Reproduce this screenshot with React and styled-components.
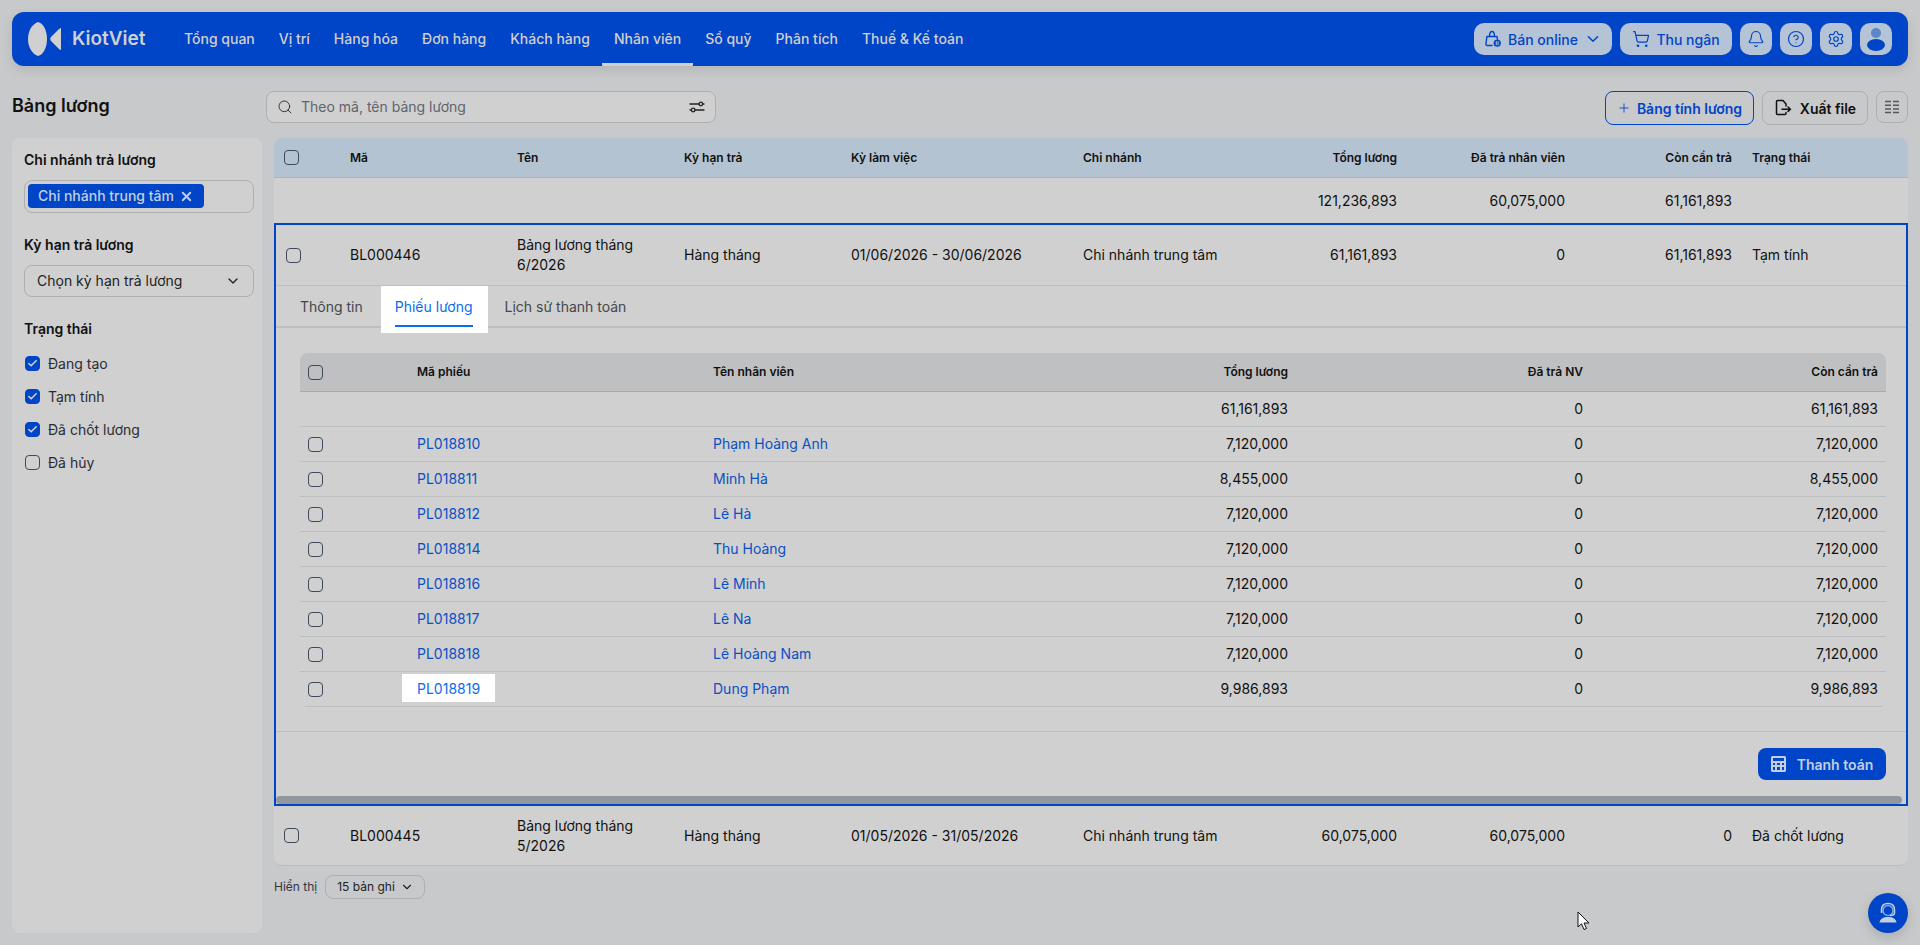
import React from 'react';
import styled, { createGlobalStyle } from 'styled-components';
import {
  Search,
  ShoppingCart,
  Bell,
  CircleHelp,
  Settings,
  Plus,
  ChevronDown,
  X,
  Check,
} from 'lucide-react';

const BLUE = '#0044c8';
const PANEL = '#d0d0d0';
const LINE = '#bdbec0';

const GlobalStyle = createGlobalStyle`
  * { box-sizing: border-box; }
  html, body { margin: 0; padding: 0; }
  body {
    background: #c8c9cb;
    color: #111;
    font-family: Inter, "Noto Sans", sans-serif;
    font-size: 14px;
    line-height: 20px;
    overflow: hidden;
  }
`;

const Page = styled.div`
  position: relative;
  width: 1920px;
  height: 945px;
  padding: 12px;
`;

const Header = styled.header`
  display: flex;
  align-items: center;
  height: 54px;
  padding: 0 16px;
  background: ${BLUE};
  border-radius: 12px;
  box-shadow: 0 4px 12px rgba(0, 0, 0, 0.1);
`;

const Logo = styled.div`
  display: flex;
  align-items: center;
  gap: 10px;
  width: 144px;
  color: ${PANEL};
  font-size: 19px;
  font-weight: 600;
`;

const Nav = styled.nav`
  display: flex;
  height: 100%;
  flex: 1;
`;

const NavItem = styled.a`
  display: flex;
  align-items: center;
  padding: 0 12px;
  color: ${PANEL};
  font-weight: 500;
  white-space: nowrap;
  border-bottom: 3px solid ${(p) => (p.$active ? PANEL : 'transparent')};
  border-top: 3px solid transparent;
  border-radius: 0 0 1px 1px;
`;

const HeaderActions = styled.div`
  display: flex;
  gap: 8px;
`;

const HeaderButton = styled.button`
  display: flex;
  align-items: center;
  justify-content: center;
  gap: 6px;
  height: 32px;
  width: ${(p) => p.$width || 32}px;
  padding: 0;
  border: 0;
  border-radius: 10px;
  background: #b4c3d6;
  color: ${BLUE};
  font: 500 14px Inter, sans-serif;
`;

const Toolbar = styled.div`
  display: flex;
  align-items: flex-start;
  height: 34px;
  margin: 25px 0 13px;
`;

const Title = styled.h1`
  flex: 0 0 254px;
  margin: 0;
  font-size: 18px;
  line-height: 30px;
  font-weight: 600;
  color: #111;
`;

const SearchBox = styled.div`
  display: flex;
  align-items: center;
  gap: 8px;
  width: 450px;
  height: 32px;
  padding: 0 10px;
  background: ${PANEL};
  border: 1px solid #aeafb1;
  border-radius: 8px;
  color: #60646c;
`;

const SearchText = styled.span`
  flex: 1;
`;

const ToolbarActions = styled.div`
  display: flex;
  gap: 8px;
  margin-left: auto;
`;

const ToolButton = styled.button`
  display: flex;
  align-items: center;
  justify-content: center;
  gap: ${(p) => (p.$primary ? 6 : 8)}px;
  width: ${(p) => p.$width}px;
  height: ${(p) => p.$height || 34}px;
  padding: 0;
  background: transparent;
  border: 1px solid ${(p) => (p.$primary ? BLUE : '#aeafb1')};
  border-radius: 8px;
  color: ${(p) => (p.$primary ? BLUE : '#111')};
  font: 600 14px Inter, sans-serif;
`;

const Body = styled.div`
  display: grid;
  grid-template-columns: 250px 1fr;
  column-gap: 12px;
  align-items: start;
`;

const Sidebar = styled.aside`
  height: 795px;
  padding: 12px 8px 12px 12px;
  background: ${PANEL};
  border-radius: 8px;
`;

const FilterLabel = styled.div`
  font-weight: 600;
  color: #111;
  margin-bottom: ${(p) => p.$gap || 10}px;
`;

const TagBox = styled.div`
  height: 33px;
  padding: 3px;
  margin-bottom: 22px;
  border: 1px solid #aeafb1;
  border-radius: 8px;
`;

const Tag = styled.span`
  display: inline-flex;
  align-items: center;
  justify-content: space-between;
  width: 176px;
  height: 24px;
  padding: 0 10px;
  background: ${BLUE};
  border-radius: 4px;
  color: #c3cede;
  font-weight: 500;
`;

const SelectBox = styled.div`
  display: flex;
  align-items: center;
  justify-content: space-between;
  height: 32px;
  padding: 0 12px;
  margin-bottom: 22px;
  border: 1px solid #aeafb1;
  border-radius: 8px;
  color: #222;
`;

const CheckRow = styled.label`
  display: flex;
  align-items: center;
  gap: 8px;
  height: 33px;
  color: #2a2c30;
`;

const Box = styled.span`
  display: inline-flex;
  flex: none;
  align-items: center;
  justify-content: center;
  width: 15px;
  height: 15px;
  margin-left: ${(p) => p.$left || 0}px;
  border-radius: 4px;
  border: 1px solid ${(p) => (p.$checked ? BLUE : '#3e4a5c')};
  background: ${(p) => (p.$checked ? BLUE : 'transparent')};
  color: ${PANEL};
`;

const Content = styled.main`
  min-width: 0;
`;

const MAIN_COLS = '76px 167px 167px 167px 232px 164px 150px 168px 167px 176px';
const INNER_COLS = '74px 167px 167px 167px 232px 164px 150px 168px 167px 174px';

const TableRow = styled.div`
  display: grid;
  grid-template-columns: ${(p) => (p.$inner ? INNER_COLS : MAIN_COLS)};
  align-items: center;
  height: ${(p) => p.$height}px;
  background: ${PANEL};
`;

const TableHead = styled(TableRow)`
  background: #b4c3d2;
  border-bottom: 1px solid #a3b5cc;
  border-radius: 8px 8px 0 0;
  font-size: 12px;
  font-weight: 600;
  color: #111;
`;

const LastRow = styled(TableRow)`
  border-bottom: 1px solid ${LINE};
  border-radius: 0 0 8px 8px;
`;

const CheckCell = styled.div`
  display: flex;
  padding-left: ${(p) => p.$left || 10}px;
`;

const Num = styled.div`
  text-align: right;
`;

const StatusCell = styled.div`
  padding-left: 20px;
`;

const Expanded = styled.section`
  position: relative;
  height: 583px;
  background: ${PANEL};
  border: 2px solid ${BLUE};
`;

const ExpandedRow = styled(TableRow)`
  border-bottom: 1px solid ${LINE};
`;

const Tabs = styled.div`
  display: flex;
  gap: 32px;
  height: 42px;
  padding-left: 24px;
  border-bottom: 2px solid ${LINE};
`;

const TabItem = styled.div`
  position: relative;
  height: 41px;
  padding-top: 11px;
  color: ${(p) => (p.$active ? '#0a6cf0' : '#44474d')};
  z-index: 0;

  ${(p) =>
    p.$active &&
    `&::before {
      content: '';
      position: absolute;
      z-index: -1;
      left: -14px;
      right: -15px;
      top: 0;
      bottom: -6px;
      background: #fff;
    }
    &::after {
      content: '';
      position: absolute;
      left: 0;
      right: 0;
      bottom: 0;
      height: 2px;
      background: #0a6cf0;
    }`}
`;

const SubWrap = styled.div`
  height: 404px;
  padding: 25px 20px 0 24px;
  border-bottom: 1px solid ${LINE};
`;

const SUB_COLS = '117px 296px 300px 275px 295px 295px';

const SubRow = styled.div`
  position: relative;
  display: grid;
  grid-template-columns: ${SUB_COLS};
  align-items: center;
  height: 35px;
  padding-right: 10px;
  border-bottom: 1px solid ${(p) => (p.$last ? 'transparent' : LINE)};

  ${(p) =>
    p.$last &&
    `&::after {
      content: '';
      position: absolute;
      left: 5px;
      right: 4px;
      bottom: -1px;
      height: 1px;
      background: ${LINE};
    }`}
`;

const SubHead = styled(SubRow)`
  height: 39px;
  background: #bfc0c2;
  border-bottom: 1px solid #a8a9ab;
  border-radius: 8px 8px 0 0;
  font-size: 12px;
  font-weight: 600;
  color: #111;
`;

const LinkText = styled.a`
  color: #0b4fc4;
`;

const SpotLink = styled.a`
  position: relative;
  z-index: 0;
  color: #0a6cf0;

  &::before {
    content: '';
    position: absolute;
    z-index: -1;
    left: -15px;
    right: -15px;
    top: -6px;
    bottom: -5px;
    background: #fff;
  }
`;

const SubFooter = styled.div`
  display: flex;
  justify-content: flex-end;
  padding: 16px 20px 0 0;
`;

const PayButton = styled.button`
  display: flex;
  align-items: center;
  justify-content: center;
  gap: 11px;
  width: 128px;
  height: 32px;
  padding: 0;
  border: 0;
  border-radius: 8px;
  background: ${BLUE};
  color: #c3cede;
  font: 600 14px Inter, sans-serif;
`;

const Scrollbar = styled.div`
  position: absolute;
  left: 0;
  right: 4px;
  bottom: 0;
  height: 8px;
  background: #92979e;
  border-radius: 4px;
`;

const Pager = styled.div`
  display: flex;
  align-items: center;
  gap: 8px;
  margin-top: 9px;
  font-size: 12px;
  color: #33363b;
`;

const PagerSelect = styled.div`
  display: flex;
  align-items: center;
  justify-content: space-between;
  width: 100px;
  height: 24px;
  padding: 0 10px 0 11px;
  border: 1px solid #aeafb1;
  border-radius: 8px;
  color: #222;
`;

const Fab = styled.button`
  position: absolute;
  right: 12px;
  bottom: 12px;
  display: flex;
  align-items: center;
  justify-content: center;
  width: 40px;
  height: 40px;
  padding: 0;
  border: 0;
  border-radius: 50%;
  background: ${BLUE};
  box-shadow: 0 4px 12px rgba(0, 0, 0, 0.15);
`;

const Cursor = styled.svg`
  position: absolute;
  left: 1577px;
  top: 911px;
`;

const navItems = ['Tổng quan', 'Vị trí', 'Hàng hóa', 'Đơn hàng', 'Khách hàng', 'Nhân viên', 'Sổ quỹ', 'Phân tích', 'Thuế & Kế toán'];

const slips = [
  ['PL018810', 'Phạm Hoàng Anh', '7,120,000'],
  ['PL018811', 'Minh Hà', '8,455,000'],
  ['PL018812', 'Lê Hà', '7,120,000'],
  ['PL018814', 'Thu Hoàng', '7,120,000'],
  ['PL018816', 'Lê Minh', '7,120,000'],
  ['PL018817', 'Lê Na', '7,120,000'],
  ['PL018818', 'Lê Hoàng Nam', '7,120,000'],
  ['PL018819', 'Dung Phạm', '9,986,893'],
];

const statuses = [
  ['Đang tạo', true],
  ['Tạm tính', true],
  ['Đã chốt lương', true],
  ['Đã hủy', false],
];

const LogoMark = () => (
  <svg width="34" height="34" viewBox="0 0 34 34" fill={PANEL}>
    <path d="M10 0C15 1 19 8 19 17S15 33 10 34C4 32 0 25 0 17S4 2 10 0Z" />
    <path d="M33 6V28C32 28 31 27 30 26L23 19C22 18 22 16 23 15L30 8C31 7 32 6 33 6Z" />
  </svg>
);

const BagIcon = () => (
  <svg width="18" height="18" viewBox="0 0 18 18" fill="none" stroke={BLUE} strokeWidth="1.4" strokeLinecap="round" strokeLinejoin="round">
    <path d="M8 15.500H3.200C2.400 15.500 1.800 14.900 1.900 14.100L2.900 6.500H13L13.400 9" />
    <path d="M5.500 6.500C5.500 3 6.500 1.500 8 1.500S10.500 3 10.500 6.500" />
    <circle cx="13.200" cy="13.200" r="3.600" fill={BLUE} stroke="none" />
    <path d="M12.300 11.600V14.800M14.100 11.600V14.800" stroke="#b4c3d6" strokeWidth="1" />
  </svg>
);

const FilterIcon = () => (
  <svg width="16" height="16" viewBox="0 0 16 16" fill="none" stroke="#222" strokeWidth="1.3" strokeLinecap="round">
    <path d="M1 5H10M13.500 5H15M1 11H2.500M6 11H15" />
    <circle cx="11.800" cy="5" r="1.800" />
    <circle cx="4.200" cy="11" r="1.800" />
  </svg>
);

const ExportIcon = () => (
  <svg width="18" height="18" viewBox="0 0 18 18" fill="none" stroke="#111" strokeWidth="1.5" strokeLinecap="round" strokeLinejoin="round">
    <path d="M12 7V5L9 1.500H3.500C3 1.500 2.500 2 2.500 2.500V14.500C2.500 15 3 15.500 3.500 15.500H11C11.500 15.500 12 15 12 14.500V13.500" />
    <path d="M8 10.200H16.500M14 8L16.500 10.200L14 12.400" />
  </svg>
);

const ColumnsIcon = () => (
  <svg width="16" height="14" viewBox="0 0 16 14" fill="none" stroke="#55585e" strokeWidth="1.5">
    <path d="M1 1.500H7M9 1.500H15M1 5.200H7M9 5.200H15M1 8.900H7M9 8.900H15M1 12.500H7M9 12.500H15" />
  </svg>
);

const CalcIcon = () => (
  <svg width="15" height="16" viewBox="0 0 15 16">
    <path fillRule="evenodd" fill="#c3cede" d="M1.500 0H13.500C14.300 0 15 .7 15 1.500V14.500C15 15.300 14.300 16 13.500 16H1.500C.7 16 0 15.300 0 14.500V1.500C0 .7 .7 0 1.500 0ZM2 2V5H13V2ZM2 7V9H4V7ZM6 7V9H9V7ZM11 7V9H13V7ZM2 11V14H4V11ZM6 11V14H9V11ZM11 11V14H13V11Z" />
  </svg>
);

const UserIcon = () => (
  <svg width="22" height="24" viewBox="0 0 22 24" fill={BLUE}>
    <circle cx="11" cy="6" r="5" fill="#5a86cc" />
    <ellipse cx="11" cy="18" rx="9" ry="6" />
  </svg>
);

const SupportIcon = () => (
  <svg width="24" height="24" viewBox="0 0 24 24" fill="none" stroke="#c3cede" strokeWidth="1.5">
    <circle cx="12" cy="9.500" r="5" stroke="#7ea6e0" />
    <path d="M5.500 12V9C5.500 5 8 2.500 12 2.500S18.500 5 18.500 9V12C18.500 13.500 17 14.500 14 14.500" />
    <path d="M3.500 21.500C4 18 7 16 12 16S20 18 20.500 21.500Z" fill="#c3cede" stroke="none" />
  </svg>
);

const CheckBox = ({ checked, left }) => (
  <Box $checked={checked} $left={left}>
    {checked && <Check size={11} strokeWidth={3.5} />}
  </Box>
);

const App = () => (
  <Page>
    <GlobalStyle />
    <Header>
      <Logo>
        <LogoMark />
        KiotViet
      </Logo>
      <Nav>
        {navItems.map((item) => (
          <NavItem key={item} $active={item === 'Nhân viên'}>
            {item}
          </NavItem>
        ))}
      </Nav>
      <HeaderActions>
        <HeaderButton $width={138}>
          <BagIcon />
          Bán online
          <ChevronDown size={18} />
        </HeaderButton>
        <HeaderButton $width={112}>
          <ShoppingCart size={18} strokeWidth={1.6} />
          Thu ngân
        </HeaderButton>
        <HeaderButton>
          <Bell size={18} strokeWidth={1.6} />
        </HeaderButton>
        <HeaderButton>
          <CircleHelp size={18} strokeWidth={1.6} />
        </HeaderButton>
        <HeaderButton>
          <Settings size={18} strokeWidth={1.6} />
        </HeaderButton>
        <HeaderButton>
          <UserIcon />
        </HeaderButton>
      </HeaderActions>
    </Header>

    <Toolbar>
      <Title>Bảng lương</Title>
      <SearchBox>
        <Search size={16} color="#33363b" strokeWidth={1.5} />
        <SearchText>Theo mã, tên bảng lương</SearchText>
        <FilterIcon />
      </SearchBox>
      <ToolbarActions>
        <ToolButton $primary $width={149}>
          <Plus size={14} strokeWidth={1.5} />
          Bảng tính lương
        </ToolButton>
        <ToolButton $width={106}>
          <ExportIcon />
          Xuất file
        </ToolButton>
        <ToolButton $width={32} $height={32}>
          <ColumnsIcon />
        </ToolButton>
      </ToolbarActions>
    </Toolbar>

    <Body>
      <Sidebar>
        <FilterLabel>Chi nhánh trả lương</FilterLabel>
        <TagBox>
          <Tag>
            Chi nhánh trung tâm
            <X size={15} strokeWidth={3} />
          </Tag>
        </TagBox>
        <FilterLabel>Kỳ hạn trả lương</FilterLabel>
        <SelectBox>
          Chọn kỳ hạn trả lương
          <ChevronDown size={16} strokeWidth={2} />
        </SelectBox>
        <FilterLabel $gap={8}>Trạng thái</FilterLabel>
        {statuses.map(([label, checked]) => (
          <CheckRow key={label}>
            <CheckBox checked={checked} left={1} />
            {label}
          </CheckRow>
        ))}
      </Sidebar>

      <Content>
        <TableHead $height={40}>
          <CheckCell>
            <CheckBox />
          </CheckCell>
          <div>Mã</div>
          <div>Tên</div>
          <div>Kỳ hạn trả</div>
          <div>Kỳ làm việc</div>
          <div>Chi nhánh</div>
          <Num>Tổng lương</Num>
          <Num>Đã trả nhân viên</Num>
          <Num>Còn cần trả</Num>
          <StatusCell>Trạng thái</StatusCell>
        </TableHead>
        <TableRow $height={45}>
          <div />
          <div />
          <div />
          <div />
          <div />
          <div />
          <Num>121,236,893</Num>
          <Num>60,075,000</Num>
          <Num>61,161,893</Num>
          <div />
        </TableRow>

        <Expanded>
          <ExpandedRow $inner $height={61}>
            <CheckCell>
              <CheckBox />
            </CheckCell>
            <div>BL000446</div>
            <div>Bảng lương tháng 6/2026</div>
            <div>Hàng tháng</div>
            <div>01/06/2026 - 30/06/2026</div>
            <div>Chi nhánh trung tâm</div>
            <Num>61,161,893</Num>
            <Num>0</Num>
            <Num>61,161,893</Num>
            <StatusCell>Tạm tính</StatusCell>
          </ExpandedRow>
          <Tabs>
            <TabItem>Thông tin</TabItem>
            <TabItem $active>Phiếu lương</TabItem>
            <TabItem>Lịch sử thanh toán</TabItem>
          </Tabs>
          <SubWrap>
            <SubHead>
              <CheckCell $left={8}>
                <CheckBox />
              </CheckCell>
              <div>Mã phiếu</div>
              <div>Tên nhân viên</div>
              <Num>Tổng lương</Num>
              <Num>Đã trả NV</Num>
              <Num>Còn cần trả</Num>
            </SubHead>
            <SubRow>
              <div />
              <div />
              <div />
              <Num>61,161,893</Num>
              <Num>0</Num>
              <Num>61,161,893</Num>
            </SubRow>
            {slips.map(([code, name, amount], i) => {
              const last = i === slips.length - 1;
              return (
                <SubRow key={code} $last={last}>
                  <CheckCell $left={8}>
                    <CheckBox />
                  </CheckCell>
                  <div>
                    {last ? <SpotLink>{code}</SpotLink> : <LinkText>{code}</LinkText>}
                  </div>
                  <div>
                    <LinkText>{name}</LinkText>
                  </div>
                  <Num>{amount}</Num>
                  <Num>0</Num>
                  <Num>{amount}</Num>
                </SubRow>
              );
            })}
          </SubWrap>
          <SubFooter>
            <PayButton>
              <CalcIcon />
              Thanh toán
            </PayButton>
          </SubFooter>
          <Scrollbar />
        </Expanded>

        <LastRow $height={60}>
          <CheckCell>
            <CheckBox />
          </CheckCell>
          <div>BL000445</div>
          <div>Bảng lương tháng 5/2026</div>
          <div>Hàng tháng</div>
          <div>01/05/2026 - 31/05/2026</div>
          <div>Chi nhánh trung tâm</div>
          <Num>60,075,000</Num>
          <Num>60,075,000</Num>
          <Num>0</Num>
          <StatusCell>Đã chốt lương</StatusCell>
        </LastRow>

        <Pager>
          Hiển thị
          <PagerSelect>
            15 bản ghi
            <ChevronDown size={14} />
          </PagerSelect>
        </Pager>
      </Content>
    </Body>

    <Fab>
      <SupportIcon />
    </Fab>
    <Cursor width="13" height="20" viewBox="0 0 13 20">
      <path d="M1 1V16L4.500 12.800L7 18.500L9.500 17.500L7 12H12Z" fill="#fff" stroke="#111" strokeWidth="1" />
    </Cursor>
  </Page>
);

export default App;
